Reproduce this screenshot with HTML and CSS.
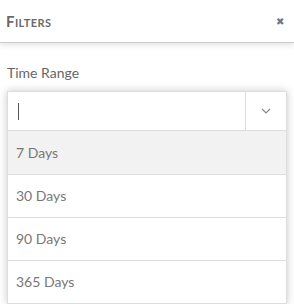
FILE: index.html
```html
<!DOCTYPE HTML>
<html>
<head>
  <title>Filters</title>
  <meta charset="utf-8">
  <link rel="stylesheet" href="styles.css">
</head>
<body>
  <div class="header">
    <span class="title">Filters</span>
    <span class="close">&#10006;</span>
  </div>

  <div class="panel">
    <div class="label">Time Range</div>
    <div class="combo">
      <div class="select">
        <div class="input"><span class="caret"></span></div>
        <div class="toggle">
          <svg width="10" height="6" viewBox="0 0 10 6"><path d="M1 1 L5 5 L9 1" fill="none" stroke="#888" stroke-width="1.2"/></svg>
        </div>
      </div>
      <ul class="menu">
        <li class="active">7 Days</li>
        <li>30 Days</li>
        <li>90 Days</li>
        <li>365 Days</li>
      </ul>
    </div>
  </div>
</body>
</html>
```

FILE: styles.css
```css
html, body{
  margin: 0; padding: 0;
}
body{
 color: #777;
 background-color: #fff;
 font-family: Lato, "Open Sans", sans-serif;
 font-size: 14px;
 overflow: hidden;
}
.header{
 height: 42px;
 border-bottom: 1px solid #ccc;
 box-shadow: 0 2px 6px rgba(0,0,0,.12);
 display: flex;
 align-items: center;
 justify-content: space-between;
 padding: 0 10px 0 6px;
}
.title{
 font-variant: small-caps;
 font-weight: bold;
 font-size: 15px;
 letter-spacing: .4px;
 color: #6a6a6a;
}
.close{
 font-size: 10px;
 color: #777;
}
.panel{
 padding: 0 7px;
}
.label{
 margin-top: 22px;
 line-height: 16px;
 height: 16px;
 color: #666;
}
.combo{
 margin-top: 10px;
 box-shadow: 0 0 8px rgba(0,0,0,.22);
}
.select{
 display: flex;
 height: 38px;
 border: 1px solid #ddd;
 background: #fff;
}
.input{
 flex: 1;
 display: flex;
 align-items: center;
 padding-left: 10px;
}
.caret{
 width: 1px;
 height: 17px;
 background: #555;
}
.toggle{
 width: 40px;
 border-left: 1px solid #ddd;
 display: flex;
 align-items: center;
 justify-content: center;
}
.menu{
 list-style: none;
 margin: 0;
 padding: 0;
 border-left: 1px solid #ddd;
 border-right: 1px solid #ddd;
}
.menu li{
 height: 42px;
 line-height: 42px;
 padding-left: 8px;
 border-bottom: 1px solid #ddd;
 background: #fff;
}
.menu li.active{
 height: 43px;
 line-height: 43px;
 background: #f2f2f2;
}
```
